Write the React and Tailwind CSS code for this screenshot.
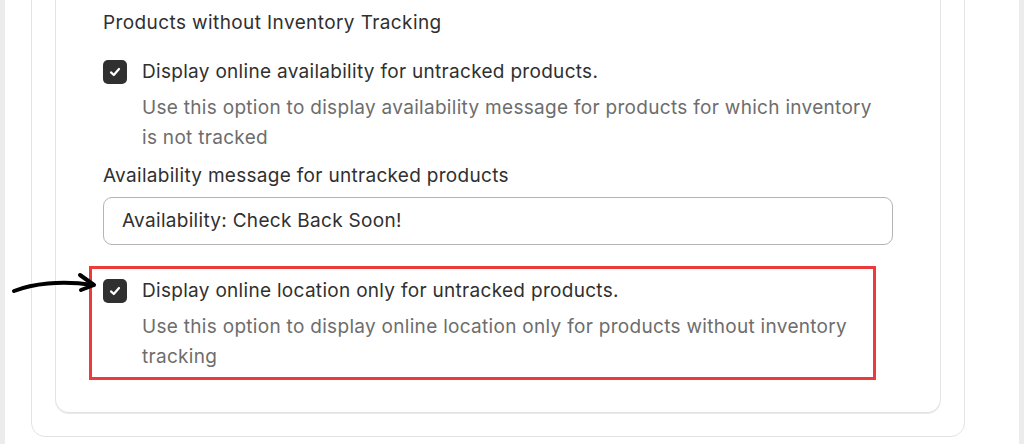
import React from 'react';

const font = { fontFamily: 'Inter, "Noto Sans", sans-serif' };

const CheckBox = () => (
  <div className="w-[24px] h-[24px] shrink-0 rounded-[5px] bg-[#303030] flex items-center justify-center">
    <svg width="16" height="16" viewBox="0 0 16 16" fill="none">
      <path d="M4 8.4 L6.8 11 L12 5" stroke="white" strokeWidth="2.2" strokeLinecap="round" strokeLinejoin="round" />
    </svg>
  </div>
);

const Option = ({ label, desc }) => (
  <div className="flex items-start gap-[15px]">
    <div className="pt-[1px]"><CheckBox /></div>
    <div>
      <p className="text-[19px] leading-[26px] tracking-[0.3px] text-[#303030]">{label}</p>
      <p className="mt-[8px] text-[19px] leading-[30px] tracking-[0.3px] text-[#6d6d6d] max-w-[740px]">{desc}</p>
    </div>
  </div>
);

const Arrow = () => (
  <svg className="absolute left-[10px] top-[270px]" width="95" height="30" viewBox="0 0 95 30" fill="none">
    <path d="M4 21 C 22 14, 50 10, 83 15" stroke="black" strokeWidth="4" strokeLinecap="round" />
    <path d="M70 5 L84 15 L71 20" stroke="black" strokeWidth="4" strokeLinecap="round" strokeLinejoin="round" />
  </svg>
);

export default function App() {
  return (
    <div className="relative w-[1024px] h-[444px] overflow-hidden bg-white flex" style={font}>
      <div className="w-[5px] bg-[#ececec]" />
      <div className="flex-1 pl-[26px] pr-[54px]">
        <div className="-mt-[40px] border border-[#e3e3e3] rounded-b-[14px] px-[23px] pb-[23px] pt-0">
          <div className="border border-t-0 border-[#e3e3e3] rounded-b-[14px] px-[47px] pb-[40px] pt-[49px] shadow-[0_1px_0_#e8e8e8]">
            <h3 className="text-[19px] leading-[26px] tracking-[0.4px] text-[#303030]">Products without Inventory Tracking</h3>
            <div className="mt-[23px]">
              <Option
                label="Display online availability for untracked products."
                desc="Use this option to display availability message for products for which inventory is not tracked"
              />
            </div>
            <p className="mt-[10px] text-[19px] leading-[26px] tracking-[0.3px] text-[#303030]">Availability message for untracked products</p>
            <div className="mt-[8px] h-[48px] border border-[#b5b5b5] rounded-[9px] flex items-center px-[18px] text-[19px] tracking-[0.3px] text-[#303030]">
              Availability: Check Back Soon!
            </div>
            <div className="relative mt-[33px]">
              <div className="absolute -left-[14px] -top-[12px] w-[787px] h-[114px] border-[3px] border-[#ec3b3b] pointer-events-none" />
              <Option
                label="Display online location only for untracked products."
                desc="Use this option to display online location only for products without inventory tracking"
              />
            </div>
          </div>
        </div>
      </div>
      <div className="w-[5px] bg-[#ececec]" />
      <Arrow />
    </div>
  );
}
